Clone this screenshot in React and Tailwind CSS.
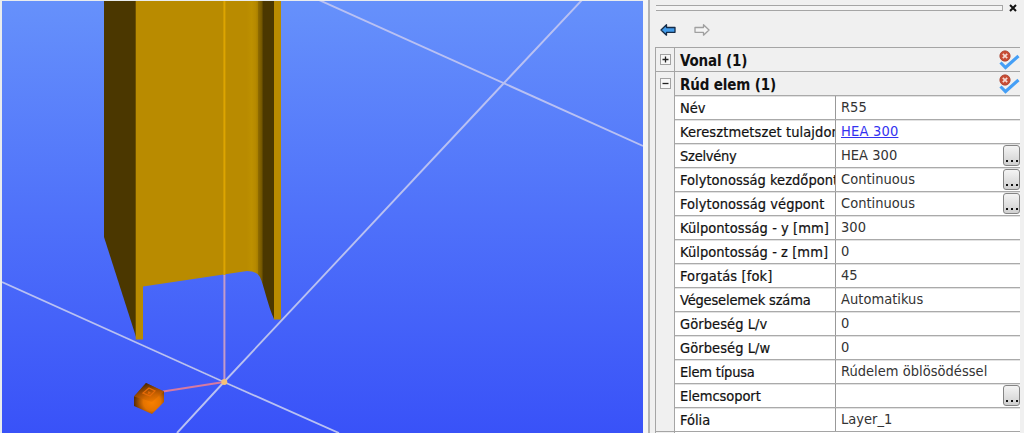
import React from 'react';

const rows = [
  { label: 'Név', value: 'R55' },
  { label: 'Keresztmetszet tulajdonságok', value: 'HEA 300', link: true, tracking: 'tracking-[0.1px]' },
  { label: 'Szelvény', value: 'HEA 300', more: true, tracking: 'tracking-[-0.25px]' },
  { label: 'Folytonosság kezdőpont', value: 'Continuous', more: true, tracking: 'tracking-[0.03px]' },
  { label: 'Folytonosság végpont', value: 'Continuous', more: true, tracking: 'tracking-[0.05px]' },
  { label: 'Külpontosság - y [mm]', value: '300', tracking: 'tracking-[0.06px]' },
  { label: 'Külpontosság - z [mm]', value: '0', tracking: 'tracking-[0.06px]' },
  { label: 'Forgatás [fok]', value: '45', tracking: 'tracking-[0.12px]' },
  { label: 'Végeselemek száma', value: 'Automatikus', tracking: 'tracking-[-0.17px]' },
  { label: 'Görbeség L/v', value: '0', tracking: 'tracking-[0.08px]' },
  { label: 'Görbeség L/w', value: '0', tracking: 'tracking-[0.08px]' },
  { label: 'Elem típusa', value: 'Rúdelem öblösödéssel', tracking: 'tracking-[-0.2px]' },
  { label: 'Elemcsoport', value: '', more: true, tracking: 'tracking-[-0.05px]' },
  { label: 'Fólia', value: 'Layer_1' },
];

function Scene() {
  return (
    <svg className="block h-[432px] w-[641px]" viewBox="2 1 641 432">
      <defs>
        <linearGradient id="sky" x1="0" y1="0" x2="0" y2="1">
          <stop offset="0" stopColor="#6691fb" />
          <stop offset="0.5" stopColor="#4f71fa" />
          <stop offset="1" stopColor="#3952f8" />
        </linearGradient>
        <linearGradient id="web" gradientUnits="userSpaceOnUse" x1="143" y1="0" x2="274" y2="0">
          <stop offset="0" stopColor="#b98b00" />
          <stop offset="0.79" stopColor="#b98b00" />
          <stop offset="0.83" stopColor="#bd9000" />
          <stop offset="0.86" stopColor="#b68900" />
          <stop offset="0.875" stopColor="#a98000" />
          <stop offset="0.88" stopColor="#8f6b00" />
          <stop offset="0.905" stopColor="#765800" />
          <stop offset="0.92" stopColor="#4b3700" />
          <stop offset="1" stopColor="#4b3700" />
        </linearGradient>
        <radialGradient id="cube" gradientUnits="userSpaceOnUse" cx="152" cy="402" r="19">
          <stop offset="0" stopColor="#f98000" />
          <stop offset="0.45" stopColor="#e57300" />
          <stop offset="1" stopColor="#4b2605" />
        </radialGradient>
        <linearGradient id="cubeTop" x1="0.2" y1="0" x2="0.6" y2="1">
          <stop offset="0" stopColor="#3b2000" />
          <stop offset="0.5" stopColor="#a84e00" />
          <stop offset="1" stopColor="#e87400" />
        </linearGradient>
      </defs>
      <rect x="2" y="0" width="641" height="433" fill="url(#sky)" />
      <g stroke="#b9c1f3" strokeWidth="1.9">
        <path d="M2 282 224 382 339 433" />
        <path d="M177 433 224 382 504 83 582 0" />
        <path d="M319 0 643 146" />
      </g>
      <path d="M104 0H137V340L104 237Z" fill="#4b3700" />
      <path d="M143 0H274V319C268 306 264 286 260 277Q257 271 247 271L143 286.500Z" fill="url(#web)" />
      <path d="M135.700 0H143V339.500H135.700Z" fill="#b98b00" />
      <path d="M274 0H281V319.500H274Z" fill="#b98b00" />
      <path d="M224.400 0V275" stroke="#dda500" strokeWidth="2" />
      <path d="M224.400 275V382" stroke="#c49bc9" strokeWidth="2" />
      <path d="M163 391.500 224 382" stroke="#d77aa1" strokeWidth="1.800" />
      <path d="M146 383 164 391.500V402L152 414 134 406V396.500Z" fill="url(#cube)" />
      <path d="M146 383 164 391.500 152 402 134 396.500Z" fill="url(#cubeTop)" opacity="0.7" />
      <path d="M149 388 155 391 150 396 143 393Z" fill="none" stroke="#e76b08" strokeWidth="1.200" />
      <path d="M148.500 391 151 393 148 394Z" fill="#e76b08" />
      <circle cx="224.300" cy="382" r="3" fill="#f6c176" />
    </svg>
  );
}

function Arrow({ active }) {
  return (
    <svg className="h-[14px] w-4" viewBox="0 0 16 14">
      <path
        d={active ? 'M1 7 6.500 1.700V4.500H15V9.300H6.500V12.200Z' : 'M15 7 9.500 1.700V4.500H1V9.300H9.500V12.200Z'}
        fill={active ? '#429be9' : '#f4f4f4'}
        stroke={active ? '#152b47' : '#a0a0a0'}
        strokeWidth="1.300"
        strokeLinejoin="round"
      />
    </svg>
  );
}

function Status() {
  return (
    <svg className="mt-[2px] h-[21px] w-[21px] shrink-0" viewBox="0 0 21 21">
      <circle cx="6" cy="6" r="5.200" fill="#c94d35" stroke="#a43d2b" strokeWidth="0.700" />
      <path d="M3.800 3.900 8.200 8.100M8.200 3.900 3.800 8.100" stroke="#f5dad3" strokeWidth="1.700" />
      <path d="M1.500 12.500 6.500 17.500 19.500 6" fill="none" stroke="#459ff6" strokeWidth="3.100" />
    </svg>
  );
}

function Expander({ open }) {
  return (
    <svg className="h-[11px] w-[11px]" viewBox="0 0 11 11">
      <rect x="0.500" y="0.500" width="10" height="10" fill="#f7f7f7" stroke="#a2a2a2" />
      <path d={open ? 'M2.500 5.500H8.500' : 'M2.500 5.500H8.500M5.500 2.500V8.500'} stroke="#222" strokeWidth="1.300" />
    </svg>
  );
}

function Group({ title, open }) {
  return (
    <div className="flex h-6 border-t border-[#a5a5a5]">
      <div className="flex w-[19px] shrink-0 justify-center border-r border-[#a5a5a5] pt-[6px]">
        <Expander open={open} />
      </div>
      <div className="flex flex-1 justify-between pl-[5px]">
        <span className="text-[15px] leading-[26px] font-bold tracking-[-0.15px] text-[#111]">{title}</span>
        <Status />
      </div>
    </div>
  );
}

function Row({ label, value, link, more, tracking = '' }) {
  return (
    <div className="flex h-6 border-t border-[#aaa] bg-white shadow-[inset_0_1px_0_#e2e2e2]">
      <div
        className={`w-[161px] shrink-0 overflow-hidden border-r border-[#999] pl-[5px] text-[14.500px] leading-[25px] whitespace-nowrap text-[#111] [-webkit-text-stroke:0.2px_#111] ${tracking}`}
      >
        {label}
      </div>
      <div className="flex flex-1 justify-between pl-[5px] text-[14.500px] leading-[23px] tracking-[0.03px] whitespace-nowrap text-[#333]">
        <span className={link ? 'tracking-[0.2px] text-[#3333f0] underline' : ''}>{value}</span>
        {more && (
          <button className="mt-px flex h-[21px] w-[17px] items-end justify-center gap-[3px] rounded-[3px] border border-[#858585] bg-linear-to-b from-[#f4f4f4] to-[#d0d0d0] pb-[3px]">
            <i className="h-[2px] w-[2px] bg-[#111]" />
            <i className="h-[2px] w-[2px] bg-[#111]" />
            <i className="h-[2px] w-[2px] bg-[#111]" />
          </button>
        )}
      </div>
    </div>
  );
}

export default function App() {
  return (
    <div className="flex h-[433px] w-[1024px] overflow-hidden bg-[#f0f0f0] font-['DejaVu_Sans_Condensed','DejaVu_Sans',sans-serif] [font-stretch:condensed]">
      <div className="w-[643px] shrink-0 bg-[#e9ecee] pt-px pl-[2px]">
        <Scene />
      </div>
      <div className="w-[7px] shrink-0 border-r-2 border-[#b4b4b4] bg-[#f5f5f5]" />
      <div className="w-[370px] shrink-0 pl-[5px]">
        <div className="flex h-[14px] pt-[4px]">
          <div className="mt-px ml-px h-[6px] w-[347px] border-y border-r border-[#a5a5a5] bg-[#f4f4f4]" />
          <svg className="ml-[6px] h-[8px] w-[8px]" viewBox="0 0 8 8">
            <path d="M1 1 7 7M7 1 1 7" stroke="#111" strokeWidth="2" />
          </svg>
        </div>
        <div className="flex h-[33px] gap-[18px] pt-[9px] pl-[5px]">
          <Arrow active />
          <Arrow />
        </div>
        <div className="border-l border-[#a5a5a5]">
          <Group title="Vonal (1)" />
          <Group title="Rúd elem (1)" open />
          <div className="flex">
            <div className="w-[19px] shrink-0 border-r border-[#a5a5a5]" />
            <div className="flex-1">
              {rows.map((row) => (
                <Row key={row.label} {...row} />
              ))}
            </div>
          </div>
          <div className="flex h-[3px] border-t border-[#a5a5a5]">
            <div className="w-[19px] border-r border-[#a5a5a5]" />
            <div className="flex-1 bg-white" />
          </div>
        </div>
      </div>
    </div>
  );
}
